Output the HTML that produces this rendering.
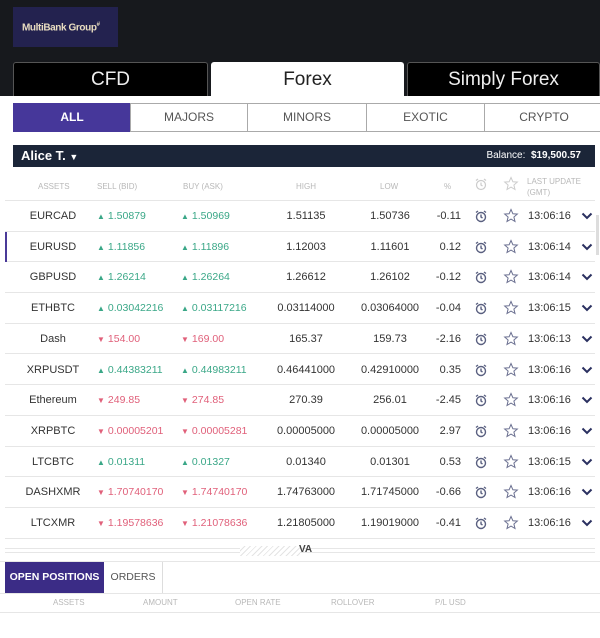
<!DOCTYPE html>
<html><head><meta charset="utf-8"><style>
*{box-sizing:border-box;margin:0;padding:0}
body{width:600px;height:638px;overflow:hidden;background:#fff;font-family:"Liberation Sans",sans-serif;position:relative}
.abs{position:absolute}
.hdr{left:0;top:0;width:600px;height:55px;background:#17191d}
.logo{left:13px;top:7px;width:105px;height:40px;background:#23224f;color:#e8dcc0;font-size:10px;font-weight:bold;letter-spacing:-0.4px;padding:15px 0 0 9px}
.tabbar{left:0;top:55px;width:600px;height:41px;background:#17191d}
.tab{top:62px;height:34px;border:1px solid #555;border-bottom:none;border-radius:3px 3px 0 0;background:#000;color:#eee;font-size:19px;text-align:center;line-height:33px}
.filt{top:103px;height:29px;border:1px solid #aaa;font-size:12px;color:#555;text-align:center;line-height:27px;background:#fff}
.acct{left:13px;top:145px;width:582px;height:22px;background:#1b2538;color:#fff}
.ch{top:178px;font-size:8px;color:#b8b8b8;text-transform:uppercase}
.row{left:5px;width:590px;height:30.7px;border-bottom:1px solid #e6e6e6;font-size:11px;color:#333}
.row span{position:absolute;top:0;line-height:30px}
.g{color:#3aa787;font-size:10.5px}.r{color:#e0607a;font-size:10.5px}
.tri{font-size:8px;margin-right:3px}
.c{text-align:center}
</style></head><body>
<div class="abs hdr"></div>
<div class="abs logo">MultiBank Group<sup style="font-size:6px">#</sup></div>
<div class="abs tabbar"></div>
<div class="abs tab" style="left:13px;width:195px">CFD</div>
<div class="abs tab" style="left:211px;width:193px;background:#fff;color:#222;border-color:#fff">Forex</div>
<div class="abs tab" style="left:407px;width:193px">Simply Forex</div>
<div class="abs filt" style="left:13px;width:118px;background:#46379a;color:#fff;border-color:#46379a;font-weight:bold">ALL</div>
<div class="abs filt" style="left:130px;width:118px">MAJORS</div>
<div class="abs filt" style="left:247px;width:120px">MINORS</div>
<div class="abs filt" style="left:366px;width:119px">EXOTIC</div>
<div class="abs filt" style="left:484px;width:120px">CRYPTO</div>
<div class="abs acct"><span class="abs" style="left:8px;top:3px;font-size:13px;font-weight:bold">Alice T. <span style="font-size:9px">▼</span></span><span class="abs" style="right:14px;top:5px;font-size:10px">Balance:&nbsp; <b>$19,500.57</b></span></div>
<div class="abs ch" style="left:38px;top:182px">Assets</div>
<div class="abs ch" style="left:97px;top:182px">Sell (Bid)</div>
<div class="abs ch" style="left:183px;top:182px">Buy (Ask)</div>
<div class="abs ch" style="left:296px;top:182px">High</div>
<div class="abs ch" style="left:380px;top:182px">Low</div>
<div class="abs ch" style="left:444px;top:182px">%</div>
<div class="abs" style="left:474px;top:177px"><svg width="14" height="14" viewBox="0 0 14 14" fill="none" stroke="#ccc" stroke-width="1.2"><circle cx="7" cy="8" r="4.5"/><path d="M7 5.5V8L8.5 9M2 3.5L4 2M12 3.5L10 2"/></svg></div>
<div class="abs" style="left:503px;top:176px"><svg width="16" height="16" viewBox="0 0 16 16" fill="none" stroke="#ccc" stroke-width="1"><path d="M8 1.5L9.9 5.8L14.3 6.1L10.9 9L12 13.5L8 11.1L4 13.5L5.1 9L1.7 6.1L6.1 5.8Z"/></svg></div>
<div class="abs ch" style="left:527px;top:176px;line-height:11px">Last Update<br>(GMT)</div>
<div class="abs" style="left:5px;top:200px;width:590px;border-top:1px solid #e6e6e6"></div>
<div class="abs" style="left:596px;top:215px;width:3px;height:40px;background:#ddd"></div>
<div id="rows"></div>
<div class="abs" style="left:5px;top:232px;width:2px;height:30px;background:#4a3a98"></div>
<div class="abs" style="left:5px;top:548px;width:590px;border-top:1px solid #e6e6e6"></div>
<div class="abs" style="left:5px;top:552px;width:590px;border-top:1px solid #e6e6e6"></div>
<div class="abs" style="left:240px;top:546px;width:60px;height:10px;background:repeating-linear-gradient(135deg,#fff 0 3px,#e4e4e4 3px 4px)"></div>
<div class="abs" style="left:299px;top:544px;font-size:10px;color:#444;font-weight:bold">VA</div>
<div class="abs" style="left:0;top:561px;width:600px;border-top:1px solid #e6e6e6"></div>
<div class="abs" style="left:5px;top:562px;width:99px;height:31px;background:#3b2c86;color:#fff;font-size:10.5px;font-weight:bold;line-height:31px;text-align:center">OPEN POSITIONS</div>
<div class="abs" style="left:104px;top:562px;width:59px;height:31px;border-right:1px solid #ddd;color:#555;font-size:10.5px;line-height:31px;text-align:center">ORDERS</div>
<div class="abs" style="left:0;top:593px;width:600px;border-top:1px solid #e6e6e6"></div>
<div class="abs ch" style="left:53px;top:598px">Assets</div>
<div class="abs ch" style="left:143px;top:598px">Amount</div>
<div class="abs ch" style="left:235px;top:598px">Open Rate</div>
<div class="abs ch" style="left:331px;top:598px">Rollover</div>
<div class="abs ch" style="left:435px;top:598px">P/L USD</div>
<div class="abs" style="left:0;top:612px;width:600px;border-top:1px solid #e6e6e6"></div>
<script>
var d=[["EURCAD",1,"1.50879","1.50969","1.51135","1.50736","-0.11","13:06:16"],
["EURUSD",1,"1.11856","1.11896","1.12003","1.11601","0.12","13:06:14"],
["GBPUSD",1,"1.26214","1.26264","1.26612","1.26102","-0.12","13:06:14"],
["ETHBTC",1,"0.03042216","0.03117216","0.03114000","0.03064000","-0.04","13:06:15"],
["Dash",0,"154.00","169.00","165.37","159.73","-2.16","13:06:13"],
["XRPUSDT",1,"0.44383211","0.44983211","0.46441000","0.42910000","0.35","13:06:16"],
["Ethereum",0,"249.85","274.85","270.39","256.01","-2.45","13:06:16"],
["XRPBTC",0,"0.00005201","0.00005281","0.00005000","0.00005000","2.97","13:06:16"],
["LTCBTC",1,"0.01311","0.01327","0.01340","0.01301","0.53","13:06:15"],
["DASHXMR",0,"1.70740170","1.74740170","1.74763000","1.71745000","-0.66","13:06:16"],
["LTCXMR",0,"1.19578636","1.21078636","1.21805000","1.19019000","-0.41","13:06:16"]];
var alarm='<svg width="14" height="14" viewBox="0 0 14 14" fill="none" stroke="#5a6080" stroke-width="1.4"><circle cx="7" cy="8" r="4.5"/><path d="M7 5.5V8L8.5 9M2 3.5L4 2M12 3.5L10 2"/></svg>';
var star='<svg width="16" height="16" viewBox="0 0 16 16" fill="none" stroke="#6a6f90" stroke-width="1"><path d="M8 1.5L9.9 5.8L14.3 6.1L10.9 9L12 13.5L8 11.1L4 13.5L5.1 9L1.7 6.1L6.1 5.8Z"/></svg>';
var chev='<svg width="12" height="8" viewBox="0 0 12 8" fill="none" stroke="#2a3060" stroke-width="2"><path d="M1.5 1.5L6 6L10.5 1.5"/></svg>';
var h="";
d.forEach(function(r,i){var t=201+i*30.7;var cl=r[1]?"g":"r";var tr=r[1]?"▲":"▼";
h+='<div class="abs row" style="top:'+t+'px">'+
'<span class="c" style="left:8px;width:80px">'+r[0]+'</span>'+
'<span class="'+cl+'" style="left:92px"><span class="tri" style="position:static">'+tr+'</span>'+r[2]+'</span>'+
'<span class="'+cl+'" style="left:176px"><span class="tri" style="position:static">'+tr+'</span>'+r[3]+'</span>'+
'<span class="c" style="left:251px;width:100px">'+r[4]+'</span>'+
'<span class="c" style="left:335px;width:100px">'+r[5]+'</span>'+
'<span style="right:134px">'+r[6]+'</span>'+
'<span style="left:469px;top:8px;line-height:0">'+alarm+'</span>'+
'<span style="left:498px;top:7px;line-height:0">'+star+'</span>'+
'<span style="left:523px">'+r[7]+'</span>'+
'<span style="left:576px;top:11px;line-height:0">'+chev+'</span></div>';});
document.getElementById("rows").innerHTML=h;
</script>
</body></html>
